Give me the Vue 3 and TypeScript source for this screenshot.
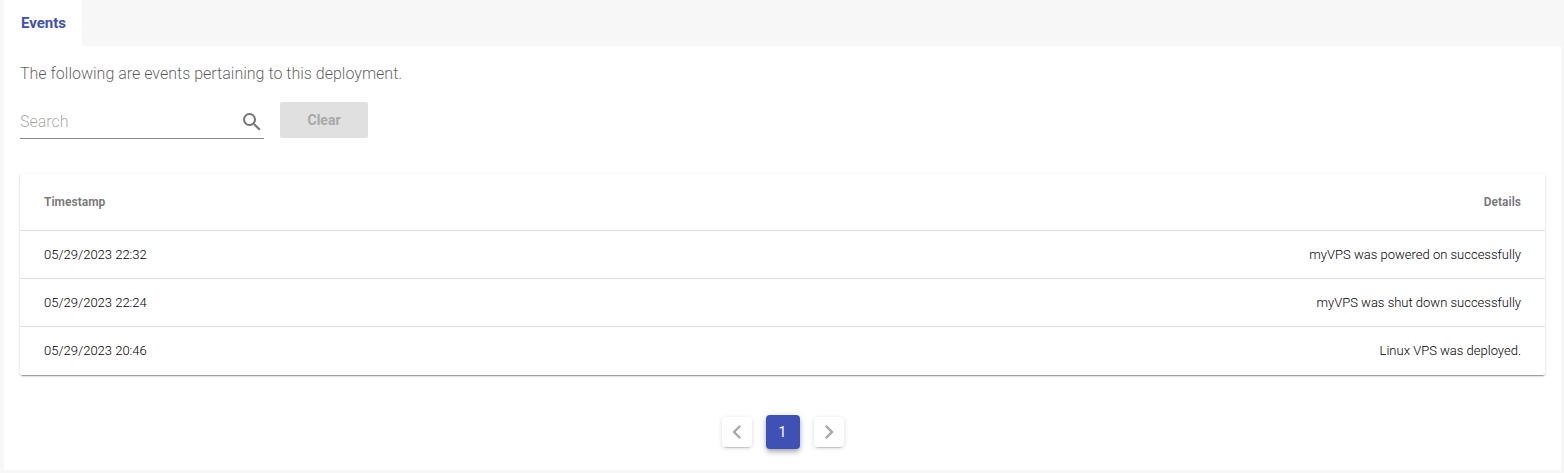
<script setup lang="ts">
import { computed, ref } from 'vue'

interface DeploymentEvent {
  timestamp: string
  details: string
}

const events: DeploymentEvent[] = [
  { timestamp: '05/29/2023 22:32', details: 'myVPS was powered on successfully' },
  { timestamp: '05/29/2023 22:24', details: 'myVPS was shut down successfully' },
  { timestamp: '05/29/2023 20:46', details: 'Linux VPS was deployed.' },
]

const search = ref('')

const visibleEvents = computed(() => {
  const term = search.value.trim().toLowerCase()
  return events.filter((e) => `${e.timestamp} ${e.details}`.toLowerCase().includes(term))
})
</script>

<template>
  <main class="page">
    <div class="tabs" role="tablist">
      <button id="events-tab" class="tab" type="button" role="tab" aria-selected="true" aria-controls="events-panel">Events</button>
    </div>

    <section id="events-panel" class="panel" role="tabpanel" aria-labelledby="events-tab">
      <p class="intro">The following are events pertaining to this deployment.</p>

      <form class="filters" @submit.prevent>
        <label class="search">
          <input v-model="search" class="search-input" type="text" placeholder="Search" aria-label="Search" />
          <svg class="search-icon" viewBox="0 0 24 24" aria-hidden="true">
            <path d="M9.5 3A6.5 6.5 0 0 1 16 9.5c0 1.61-.59 3.09-1.56 4.23l.27.27h.79l5 5-1.5 1.5-5-5v-.79l-.27-.27A6.516 6.516 0 0 1 9.5 16 6.5 6.5 0 0 1 3 9.5 6.5 6.5 0 0 1 9.5 3m0 2C7 5 5 7 5 9.5S7 14 9.5 14 14 12 14 9.5 12 5 9.5 5Z" />
          </svg>
        </label>
        <button class="clear" type="button" :disabled="search === ''" @click="search = ''">Clear</button>
      </form>

      <table class="events">
        <thead>
          <tr>
            <th scope="col">Timestamp</th>
            <th scope="col">Details</th>
          </tr>
        </thead>
        <tbody>
          <tr v-for="event in visibleEvents" :key="event.timestamp">
            <td>{{ event.timestamp }}</td>
            <td>{{ event.details }}</td>
          </tr>
        </tbody>
      </table>

      <nav class="pagination" aria-label="Pagination">
        <button class="step" type="button" aria-label="Previous page" disabled>
          <svg viewBox="0 0 24 24" aria-hidden="true">
            <path d="M15.41 16.58 10.83 12l4.58-4.59L14 6l-6 6 6 6 1.41-1.42Z" />
          </svg>
        </button>
        <button class="current" type="button" aria-current="page">1</button>
        <button class="step" type="button" aria-label="Next page" disabled>
          <svg viewBox="0 0 24 24" aria-hidden="true">
            <path d="M8.59 16.58 13.17 12 8.59 7.41 10 6l6 6-6 6-1.41-1.42Z" />
          </svg>
        </button>
      </nav>
    </section>
  </main>
</template>

<style>
body {
  background: #f7f7f7;
}
</style>

<style scoped>
.page {
  padding: 0 3px 3px 4px;
  background: #f7f7f7;
  font-family: Roboto, "Liberation Sans", sans-serif;
  font-weight: 300;
}

button,
input {
  font-family: inherit;
  border: 0;
}

.tabs {
  display: flex;
}

.tab {
  height: 46px;
  padding: 0 16px 0 17px;
  border-radius: 0 2px 0 0;
  background: #fff;
  color: #3f51b5;
  font-size: 15px;
  font-weight: 700;
}

.panel {
  padding: 16px 16px 21px;
  background: #fff;
}

.intro {
  margin: 0;
  color: rgba(0, 0, 0, 0.66);
  font-size: 16px;
  line-height: 24px;
}

.filters {
  display: flex;
  align-items: flex-start;
  gap: 16px;
  margin-top: 16px;
}

.search {
  display: flex;
  align-items: center;
  box-sizing: border-box;
  width: 244px;
  height: 37px;
  border-bottom: 1px solid #868686;
}

.search-input {
  flex: 1;
  min-width: 0;
  padding: 2px 0 0;
  background: transparent;
  color: rgba(0, 0, 0, 0.87);
  font-size: 16px;
  font-weight: 300;
  outline: none;
}

.search-input::placeholder {
  color: rgba(0, 0, 0, 0.38);
  opacity: 1;
}

.search-icon {
  width: 24px;
  height: 24px;
  margin-top: 4px;
  fill: #757575;
}

.clear {
  width: 88px;
  height: 36px;
  padding: 0;
  border-radius: 2px;
  background: #e0e0e0;
  color: rgba(0, 0, 0, 0.87);
  font-size: 14px;
  font-weight: 700;
}

.clear:disabled {
  color: #a8a8a8;
}

.events {
  width: 100%;
  margin-top: 35px;
  padding-bottom: 1px;
  border-collapse: separate;
  border-spacing: 0;
  border-radius: 2px;
  background: #fff;
  box-shadow: 0 3px 1px -2px rgba(0, 0, 0, 0.2), 0 1px 1px rgba(0, 0, 0, 0.14), 0 1px 3px rgba(0, 0, 0, 0.16);
}

.events th,
.events td {
  box-sizing: border-box;
  height: 48px;
  padding: 0 24px;
  color: rgba(0, 0, 0, 0.87);
  font-size: 13px;
  font-weight: 300;
  text-align: left;
}

.events th {
  height: 56px;
  color: rgba(0, 0, 0, 0.54);
  font-size: 12px;
  font-weight: 700;
}

.events td {
  border-top: 1px solid #e0e0e0;
  color: #000;
}

.events th:last-child,
.events td:last-child {
  text-align: right;
}

.pagination {
  display: flex;
  align-items: center;
  justify-content: center;
  gap: 14px;
  margin-top: 40px;
}

.step,
.current {
  display: flex;
  align-items: center;
  justify-content: center;
  padding: 0;
  border-radius: 4px;
}

.step {
  width: 30px;
  height: 30px;
  background: #fff;
  box-shadow: 0 3px 1px -2px rgba(0, 0, 0, 0.16), 0 1px 4px rgba(0, 0, 0, 0.16);
}

.step svg {
  flex: none;
  width: 28px;
  height: 28px;
  fill: #a8a8a8;
}

.current {
  width: 34px;
  height: 34px;
  background: #3f51b5;
  color: #fff;
  font-size: 14px;
  font-weight: 400;
  box-shadow: 0 2px 4px -1px rgba(0, 0, 0, 0.2), 0 4px 5px rgba(0, 0, 0, 0.14), 0 1px 10px rgba(0, 0, 0, 0.12);
}
</style>
